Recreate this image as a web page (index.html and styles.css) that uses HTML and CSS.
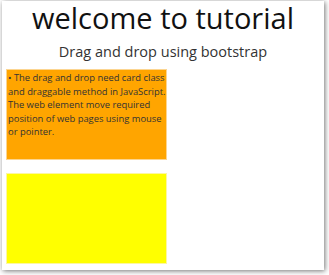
FILE: index.html
```html
<!DOCTYPE html>
<html>
<head>
<meta charset="utf-8">
<link rel="stylesheet" href="styles.css">
</head>
<body>
<div class="frame">
  <h1 class="title">welcome to tutorial</h1>
  <h2 class="subtitle">Drag and drop using bootstrap</h2>
  <div class="cards">
    <div class="card card-orange">
      <p class="card-text">• The drag and drop need card class and draggable method in JavaScript. The web element move required position of web pages using mouse or pointer.</p>
    </div>
    <div class="card card-yellow"></div>
  </div>
</div>
</body>
</html>
```
FILE: styles.css
```css
html, body {
  margin: 0;
  padding: 0;
  background: #fff;
}
body {
  width: 329px;
  height: 275px;
  overflow: hidden;
  font-family: "Open Sans", "Noto Sans", sans-serif;
}
.frame {
  margin: 1px 0 0 2px;
  width: 322px;
  height: 269px;
  background: #fff;
  box-shadow: 1px 1px 5px rgba(0, 0, 0, 0.55);
  box-sizing: border-box;
}
.title {
  margin: 0;
  text-align: center;
  font-weight: 400;
  font-size: 29px;
  line-height: 34px;
  color: #111;
}
.subtitle {
  margin: 7px 0 0;
  text-align: center;
  font-weight: 400;
  font-size: 14.5px;
  line-height: 20px;
  color: #333;
}
.cards {
  display: flex;
  flex-direction: column;
  gap: 13px;
  padding: 7px 0 0 4px;
}
.card {
  width: 161px;
  height: 91px;
  box-sizing: border-box;
}
.card-orange {
  background: #ffa500;
  border: 1px solid #fcd590;
  padding: 1px 0 0 1px;
}
.card-yellow {
  background: #ffff00;
  border: 1px solid #fdf7a0;
}
.card-text {
  margin: 0;
  font-size: 9.4px;
  line-height: 13.5px;
  color: #333;
}
```
